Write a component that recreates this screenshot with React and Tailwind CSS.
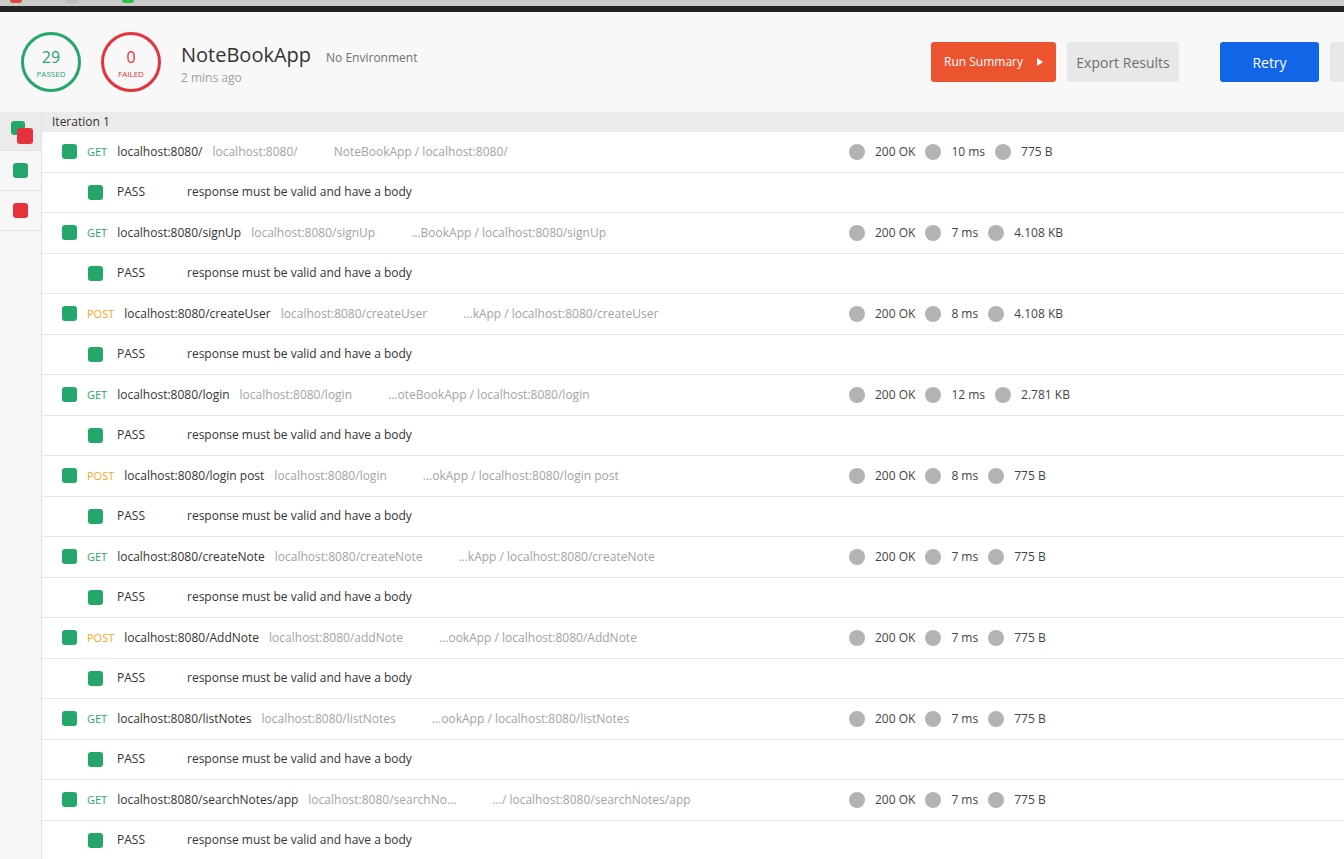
import React from 'react';

const requests = [
  { method: 'GET', name: 'localhost:8080/', url: 'localhost:8080/', path: 'NoteBookApp / localhost:8080/', time: '10 ms', size: '775 B' },
  { method: 'GET', name: 'localhost:8080/signUp', url: 'localhost:8080/signUp', path: '...BookApp / localhost:8080/signUp', time: '7 ms', size: '4.108 KB' },
  { method: 'POST', name: 'localhost:8080/createUser', url: 'localhost:8080/createUser', path: '...kApp / localhost:8080/createUser', time: '8 ms', size: '4.108 KB' },
  { method: 'GET', name: 'localhost:8080/login', url: 'localhost:8080/login', path: '...oteBookApp / localhost:8080/login', time: '12 ms', size: '2.781 KB' },
  { method: 'POST', name: 'localhost:8080/login post', url: 'localhost:8080/login', path: '...okApp / localhost:8080/login post', time: '8 ms', size: '775 B' },
  { method: 'GET', name: 'localhost:8080/createNote', url: 'localhost:8080/createNote', path: '...kApp / localhost:8080/createNote', time: '7 ms', size: '775 B' },
  { method: 'POST', name: 'localhost:8080/AddNote', url: 'localhost:8080/addNote', path: '...ookApp / localhost:8080/AddNote', time: '7 ms', size: '775 B' },
  { method: 'GET', name: 'localhost:8080/listNotes', url: 'localhost:8080/listNotes', path: '...ookApp / localhost:8080/listNotes', time: '7 ms', size: '775 B' },
  { method: 'GET', name: 'localhost:8080/searchNotes/app', url: 'localhost:8080/searchNo...', path: '.../ localhost:8080/searchNotes/app', time: '7 ms', size: '775 B' },
];

const Square = ({ red }) => (
  <span className={`inline-block w-[15px] h-[15px] rounded-[3px] shrink-0 ${red ? 'bg-[#e5323b]' : 'bg-[#25a66b]'}`} />
);

const Dot = ({ className = '' }) => <span className={`inline-block w-[16px] h-[16px] rounded-full bg-[#b3b3b3] shrink-0 ${className}`} />;

const RequestRow = ({ r }) => (
  <>
    <div className="h-[40.5px] shrink-0 flex items-center border-b border-[#e6e6e6]">
      <div className="w-[807px] flex items-center pl-[20px] shrink-0">
        <Square />
        <span className={`ml-[10px] text-[11px] ${r.method === 'GET' ? 'text-[#26a96c]' : 'text-[#f5a623]'}`}>{r.method}</span>
        <span className="ml-[10px] text-[12px] text-[#333]">{r.name}</span>
        <span className="ml-[10px] text-[12px] text-[#a3a3a3]">{r.url}</span>
        <span className="ml-[36px] text-[12px] text-[#a3a3a3]">{r.path}</span>
      </div>
      <div className="flex items-center text-[12px] text-[#444]">
        <Dot />
        <span className="ml-[10px]">200 OK</span>
        <Dot className="ml-[10px]" />
        <span className="ml-[10px]">{r.time}</span>
        <Dot className="ml-[10px]" />
        <span className="ml-[10px]">{r.size}</span>
      </div>
    </div>
    <div className="h-[40.5px] shrink-0 flex items-center border-b border-[#e6e6e6] pl-[46px]">
      <Square />
      <span className="ml-[14px] text-[12px] text-[#333] w-[70px]">PASS</span>
      <span className="text-[12px] text-[#333]">response must be valid and have a body</span>
    </div>
  </>
);

const Circle = ({ value, label, red }) => (
  <div className={`w-[60px] h-[60px] rounded-full border-[3px] flex flex-col items-center justify-center pt-[3px] shrink-0 ${red ? 'border-[#e5323b] text-[#e5323b]' : 'border-[#25a66b] text-[#25a66b]'}`}>
    <span className="text-[16px] leading-[18px]">{value}</span>
    <span className="text-[8px] leading-[12px] mt-[2px]">{label}</span>
  </div>
);

export default function App() {
  return (
    <div className="w-[1344px] h-[859px] overflow-hidden bg-white" style={{ fontFamily: '"Open Sans", "Noto Sans", sans-serif' }}>
      {/* window chrome */}
      <div className="h-[6px] bg-[#cbcbcb] flex items-start gap-[44px] pl-[10px]">
        <span className="w-[12px] h-[3px] rounded-b-full bg-[#e0443e]" />
        <span className="w-[12px] h-[3px] rounded-b-full bg-[#bdbdbd]" />
        <span className="w-[12px] h-[3px] rounded-b-full bg-[#2bc140]" />
      </div>
      <div className="h-[6px] bg-[#232323]" />

      {/* header */}
      <div className="h-[100px] bg-[#f8f8f8] flex items-center pl-[21px] whitespace-nowrap">
        <Circle value="29" label="PASSED" />
        <div className="ml-[20px] shrink-0"><Circle value="0" label="FAILED" red /></div>
        <div className="ml-[20px] flex flex-col w-[271px] shrink-0 pt-[3px]">
          <div className="flex items-baseline">
            <span className="text-[20px] text-[#333] leading-[28px]">NoteBookApp</span>
            <span className="ml-[15px] text-[12px] text-[#707070]">No Environment</span>
          </div>
          <span className="text-[12px] text-[#a0a0a0] leading-[18px]">2 mins ago</span>
        </div>
        <div className="ml-[479px] flex items-center shrink-0">
          <button className="w-[125px] h-[40px] rounded-[3px] bg-[#ec5430] text-white text-[12px] flex items-center justify-center gap-[14px] shrink-0">
            Run Summary
            <svg width="6" height="8" viewBox="0 0 6 8"><path d="M0 0L6 4L0 8Z" fill="white" /></svg>
          </button>
          <button className="ml-[11px] w-[112px] h-[40px] rounded-[3px] bg-[#e8e8e8] text-[#707070] text-[14px] shrink-0">Export Results</button>
          <button className="ml-[41px] w-[99px] h-[40px] rounded-[3px] bg-[#1166e8] text-white text-[14px] shrink-0">Retry</button>
          <button className="ml-[11px] w-[60px] h-[40px] rounded-[3px] bg-[#e8e8e8] shrink-0" />
        </div>
      </div>

      {/* body */}
      <div className="flex h-[747px]">
        <div className="w-[42px] shrink-0 bg-[#f7f7f7] border-r border-[#e3e3e3] flex flex-col">
          <div className="h-[39px] bg-[#ebebeb] border-b border-[#e3e3e3] relative">
            <span className="absolute left-[11px] top-[9px] w-[14px] h-[14px] rounded-[3px] bg-[#25a66b]" />
            <span className="absolute left-[17px] top-[16px] w-[16px] h-[16px] rounded-[3px] bg-[#e5323b]" />
          </div>
          <div className="h-[40px] border-b border-[#e3e3e3] flex items-center justify-center"><Square /></div>
          <div className="h-[40px] border-b border-[#e3e3e3] flex items-center justify-center"><Square red /></div>
        </div>
        <div className="flex-1 flex flex-col min-w-0 whitespace-nowrap">
          <div className="h-[20px] bg-[#ebebeb] flex items-center pl-[10px] text-[12px] text-[#333] shrink-0">Iteration 1</div>
          {requests.map((r, i) => (
            <RequestRow key={i} r={r} />
          ))}
        </div>
      </div>
    </div>
  );
}
